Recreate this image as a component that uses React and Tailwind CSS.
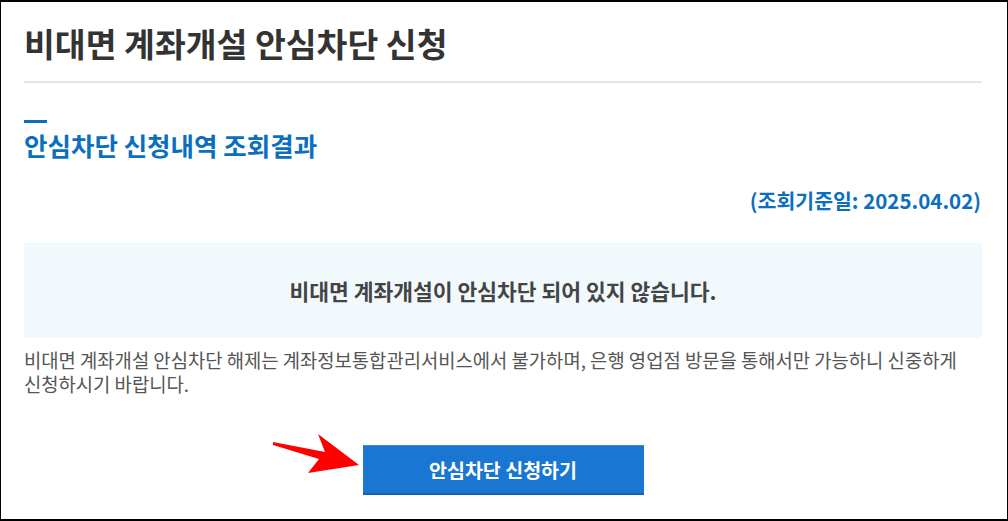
import React from "react";

const KR = "font-['Noto_Sans_CJK_KR','Noto_Sans',sans-serif]";

const Arrow = () => (
  <svg
    className="absolute left-[262px] top-[425px]"
    width="100"
    height="52"
    viewBox="262 425 100 52"
  >
    <polygon
      points="272,440 324,450 317,432 358,463 307,471 318,457 272,443"
      fill="#ff0000"
    />
  </svg>
);

export default function App() {
  return (
    <div
      className={`relative w-[1008px] h-[521px] bg-white border-t-2 border-b-2 border-x border-black ${KR}`}
    >
      <div className="pl-[23px] pr-[25px]">
        {/* page title */}
        <div className="h-[81px] border-b-2 border-[#e5e5e5] pt-[24px]">
          <h1 className="text-[33.5px] font-bold text-[#333] leading-[34px]">
            비대면 계좌개설 안심차단 신청
          </h1>
        </div>

        {/* section heading */}
        <div className="mt-[37px] w-[23px] h-[3px] bg-[#0b6fbf]" />
        <h2 className="mt-[7px] text-[25.5px] font-bold text-[#0b6fbf] leading-[30px]">
          안심차단 신청내역 조회결과
        </h2>

        <p className="mt-[27px] text-right text-[20.5px] font-bold text-[#0b6fbf] leading-[26px] pr-[1px]">
          (조회기준일: 2025.04.02)
        </p>

        {/* result box */}
        <div className="mt-[30px] h-[95px] bg-[#f2f9fd] flex items-center justify-center">
          <p className="text-[21.5px] font-bold text-[#444] leading-none">
            비대면 계좌개설이 안심차단 되어 있지 않습니다.
          </p>
        </div>

        <p className="mt-[10px] text-[18.8px] text-[#555] leading-[24px] break-keep">
          비대면 계좌개설 안심차단 해제는 계좌정보통합관리서비스에서 불가하며, 은행 영업점 방문을 통해서만 가능하니 신중하게 신청하시기 바랍니다.
        </p>

        <div className="mt-[49px] flex justify-center">
          <button className="w-[281px] h-[50px] bg-[#1976d2] border-t border-[#3a8ad8] border-b-2 border-b-[#1462b0] text-white text-[19.5px] font-bold">
            안심차단 신청하기
          </button>
        </div>
      </div>

      <Arrow />
    </div>
  );
}
